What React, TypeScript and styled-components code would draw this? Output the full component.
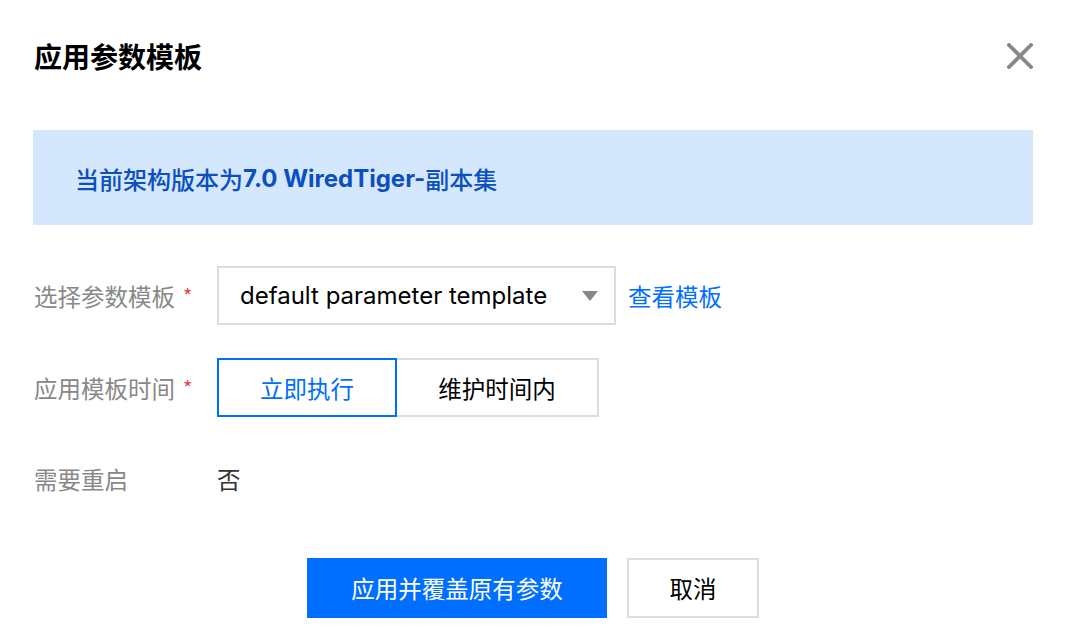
import React, { useState } from 'react';
import styled, { createGlobalStyle } from 'styled-components';

const GlobalStyle = createGlobalStyle`
    html, body {
        margin: 0;
        padding: 0;
        background: #fff;
    }
    body {
        font-family: "Noto Sans CJK SC", "Noto Sans", sans-serif;
        color: #000;
    }
`;

const Dialog = styled.div`
    width: 1070px;
    height: 644px;
    box-sizing: border-box;
    padding: 38px 37px 0 33px;
    background: #fff;
`;

const Header = styled.div`
    display: flex;
    justify-content: space-between;
    align-items: center;
    height: 36px;
    margin-bottom: 56px;
`;

const Title = styled.h2`
    margin: 0;
    padding-left: 1px;
    font-size: 28px;
    line-height: 36px;
    font-weight: 700;
    color: #000;
`;

const CloseButton = styled.button`
    display: flex;
    align-items: center;
    justify-content: center;
    width: 30px;
    height: 30px;
    padding: 0;
    margin-right: -2px;
    border: none;
    background: transparent;
    cursor: pointer;
`;

const InfoBox = styled.div`
    display: flex;
    align-items: center;
    height: 95px;
    box-sizing: border-box;
    padding: 2px 0 0 42px;
    background: #d5e7fd;
    color: #0b4fc0;
    font-size: 24px;
    font-weight: 500;
`;

const Strong = styled.span`
    font-family: "Inter", "Noto Sans", sans-serif;
    font-weight: 700;
`;

const Form = styled.div`
    display: flex;
    flex-direction: column;
    gap: 33px;
    margin-top: 41px;
`;

const Row = styled.div`
    display: flex;
    align-items: center;
    min-height: 58px;
`;

const Label = styled.div`
    display: flex;
    align-items: center;
    width: 184px;
    flex-shrink: 0;
    padding-left: 1px;
    box-sizing: border-box;
    font-size: 23.5px;
    color: #888;
`;

const Required = styled.span`
    margin-left: 8px;
    color: #e54545;
    font-size: 20px;
    line-height: 1;
`;

const Select = styled.div`
    display: flex;
    align-items: center;
    justify-content: space-between;
    width: 399px;
    height: 59px;
    box-sizing: border-box;
    padding: 0 16px 0 21px;
    border: 2px solid #ddd;
    font-family: "Inter", "Noto Sans", sans-serif;
    font-size: 24px;
    color: #000;
`;

const Link = styled.a`
    margin-left: 12px;
    font-size: 23.5px;
    color: #006eff;
    text-decoration: none;
    cursor: pointer;
`;

const Segment = styled.div`
    display: flex;
`;

const SegmentButton = styled.button<{ $active?: boolean; $width: number }>`
    width: ${p => p.$width}px;
    height: 59px;
    box-sizing: border-box;
    margin-left: ${p => (p.$active ? 0 : -2)}px;
    border: 2px solid ${p => (p.$active ? '#006eff' : '#ddd')};
    position: relative;
    z-index: ${p => (p.$active ? 1 : 0)};
    background: #fff;
    font-family: inherit;
    font-size: 23.5px;
    color: ${p => (p.$active ? '#006eff' : '#000')};
    cursor: pointer;
`;

const Value = styled.div`
    font-size: 23.5px;
    color: #333;
`;

const Footer = styled.div`
    display: flex;
    justify-content: center;
    gap: 20px;
    margin-top: 50px;
`;

const Button = styled.button<{ $primary?: boolean; $width: number }>`
    width: ${p => p.$width}px;
    height: 60px;
    box-sizing: border-box;
    border: 2px solid ${p => (p.$primary ? '#006eff' : '#ddd')};
    background: ${p => (p.$primary ? '#006eff' : '#fff')};
    color: ${p => (p.$primary ? '#fff' : '#000')};
    font-family: inherit;
    font-size: 23.5px;
    cursor: pointer;
`;

const Caret = () => (
    <svg width="16" height="10" viewBox="0 0 16 10">
        <path d="M0 0 L16 0 L8 10 Z" fill="#888" />
    </svg>
);

const CloseIcon = () => (
    <svg width="26" height="26" viewBox="0 0 26 26">
        <path d="M2 2 L24 24 M24 2 L2 24" stroke="#888" strokeWidth="3.8" strokeLinecap="square" />
    </svg>
);

const App = () => {
    const [mode, setMode] = useState<'now' | 'maintain'>('now');

    return (
        <>
            <GlobalStyle />
            <Dialog>
                <Header>
                    <Title>应用参数模板</Title>
                    <CloseButton aria-label="关闭">
                        <CloseIcon />
                    </CloseButton>
                </Header>
                <InfoBox>
                    当前架构版本为<Strong>7.0 WiredTiger-</Strong>副本集
                </InfoBox>
                <Form>
                    <Row>
                        <Label>
                            选择参数模板<Required>*</Required>
                        </Label>
                        <Select>
                            <span>default parameter template</span>
                            <Caret />
                        </Select>
                        <Link>查看模板</Link>
                    </Row>
                    <Row>
                        <Label>
                            应用模板时间<Required>*</Required>
                        </Label>
                        <Segment>
                            <SegmentButton $width={180} $active={mode === 'now'} onClick={() => setMode('now')}>
                                立即执行
                            </SegmentButton>
                            <SegmentButton
                                $width={204}
                                $active={mode === 'maintain'}
                                onClick={() => setMode('maintain')}
                            >
                                维护时间内
                            </SegmentButton>
                        </Segment>
                    </Row>
                    <Row>
                        <Label>需要重启</Label>
                        <Value>否</Value>
                    </Row>
                </Form>
                <Footer>
                    <Button $primary $width={300}>
                        应用并覆盖原有参数
                    </Button>
                    <Button $width={132}>取消</Button>
                </Footer>
            </Dialog>
        </>
    );
};

export default App;
